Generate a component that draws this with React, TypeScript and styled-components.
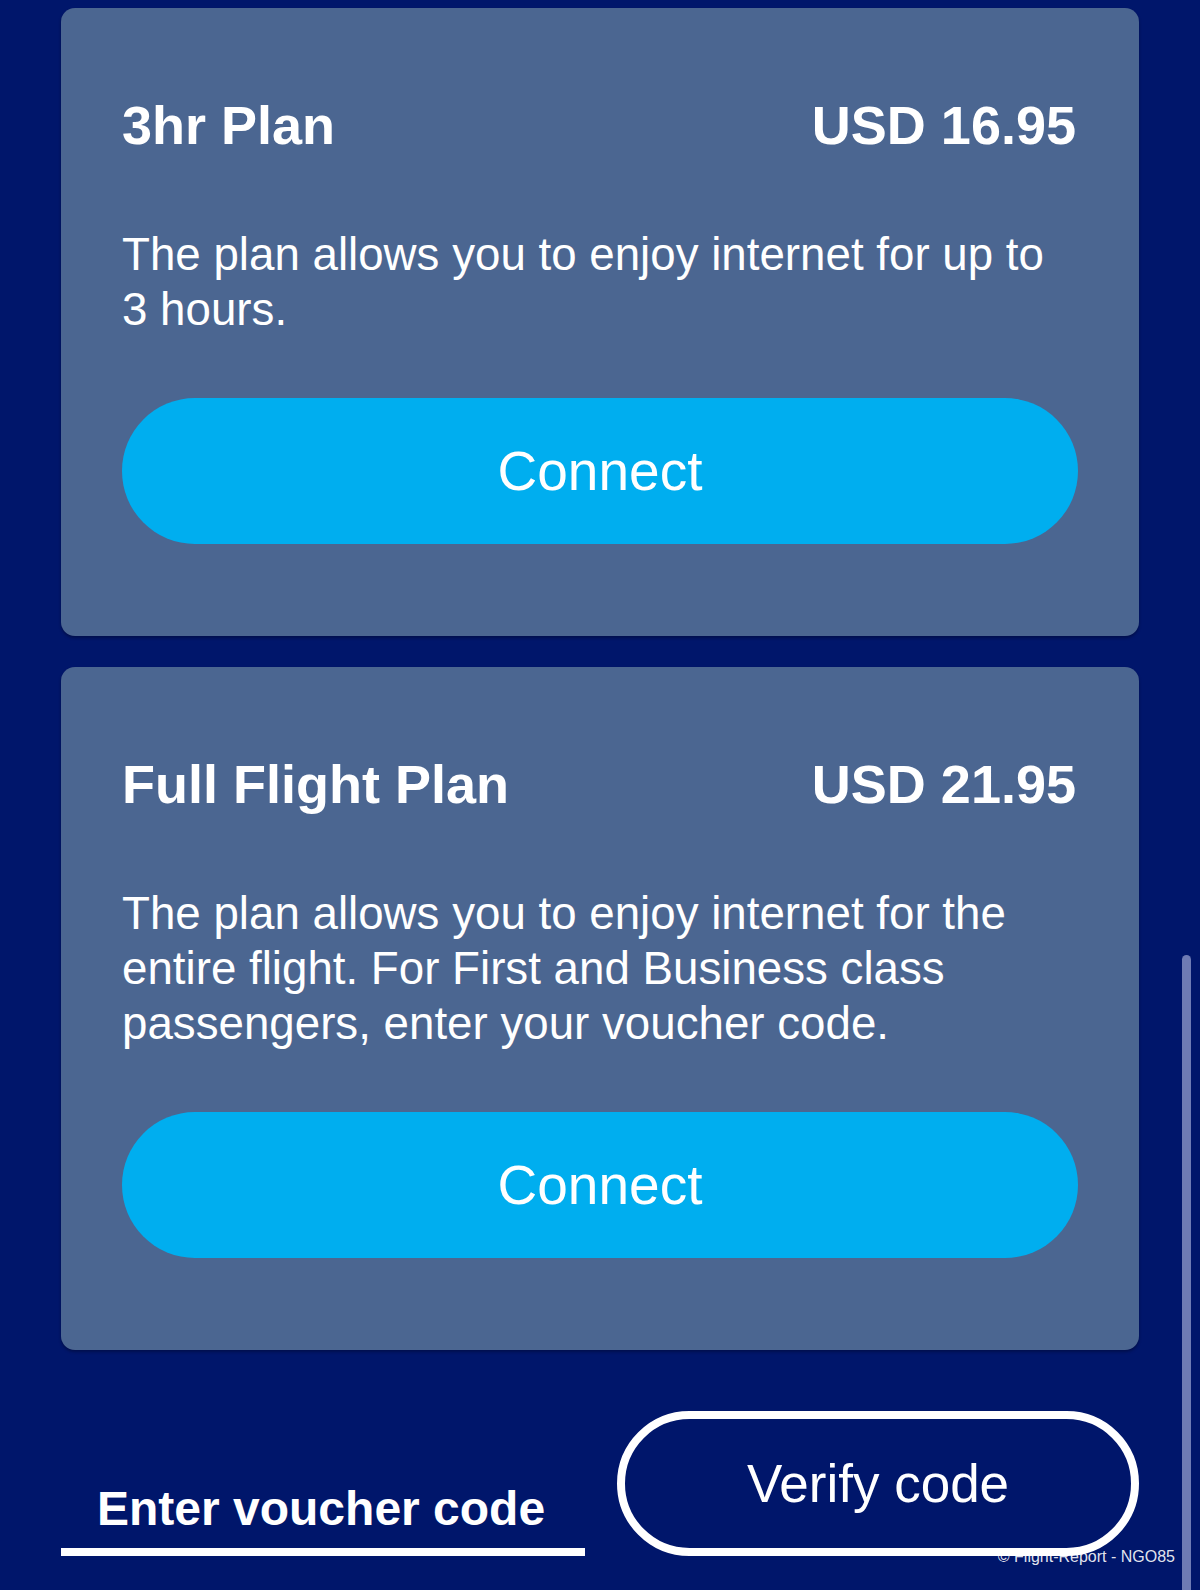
import React from "react";
import styled, { createGlobalStyle } from "styled-components";

const GlobalStyle = createGlobalStyle`
  html, body {
    margin: 0;
    padding: 0;
    background: #00166b;
  }
  body {
    font-family: "Liberation Sans", Arial, Helvetica, sans-serif;
    color: #ffffff;
  }
  * { box-sizing: border-box; }
`;

const Page = styled.main`
  position: relative;
  height: 1590px;
  overflow: hidden;
  padding: 8px 61px 0;
  display: flex;
  flex-direction: column;
  background: #00166b;
`;

const PlanList = styled.section`
  display: flex;
  flex-direction: column;
  gap: 31px;
`;

const PlanCard = styled.article`
  background: #4b6691;
  border-radius: 14px;
  padding: 86px 61px 92px;
  box-shadow: 0 2px 3px rgba(0, 0, 20, 0.35);
  display: flex;
  flex-direction: column;
`;

const PlanHeader = styled.header`
  display: flex;
  justify-content: space-between;
  align-items: baseline;
  font-size: 54px;
  font-weight: 700;
  line-height: 62px;
`;

const PlanTitle = styled.h2`
  margin: 0;
  font-size: inherit;
  font-weight: inherit;
`;

const PlanPrice = styled.span`
  font-size: inherit;
  margin-right: 2px;
`;

const PlanDescription = styled.p`
  margin: 71px 0 0;
  font-size: 45.7px;
  line-height: 55px;
`;

const ConnectButton = styled.button`
  margin-top: 61px;
  width: 100%;
  height: 146px;
  border: none;
  border-radius: 73px;
  background: #00aeef;
  color: #ffffff;
  font-family: inherit;
  font-size: 55px;
  cursor: pointer;
`;

const VoucherRow = styled.form`
  margin-top: 61px;
  display: flex;
  align-items: flex-end;
  gap: 32px;
`;

const VoucherInput = styled.input`
  width: 524px;
  height: 76px;
  padding: 0 0 12px 36px;
  border: none;
  border-bottom: 8px solid #ffffff;
  background: transparent;
  color: #ffffff;
  font-family: inherit;
  font-size: 48px;
  font-weight: 700;
  outline: none;
  &::placeholder {
    color: #ffffff;
    opacity: 1;
  }
`;

const VerifyButton = styled.button`
  width: 522px;
  height: 145px;
  border: 8px solid #ffffff;
  border-radius: 73px;
  background: transparent;
  color: #ffffff;
  font-family: inherit;
  font-size: 53px;
  cursor: pointer;
`;

const Watermark = styled.span`
  position: absolute;
  right: 25px;
  top: 1548px;
  font-size: 16px;
  line-height: 18px;
  color: rgba(255, 255, 255, 0.9);
  white-space: nowrap;
`;

const ScrollThumb = styled.div`
  position: absolute;
  right: 9px;
  top: 955px;
  bottom: -10px;
  width: 9px;
  border-radius: 5px;
  background: rgba(200, 208, 240, 0.55);
`;

const plans = [
  {
    title: "3hr Plan",
    price: "USD 16.95",
    description: "The plan allows you to enjoy internet for up to 3 hours.",
  },
  {
    title: "Full Flight Plan",
    price: "USD 21.95",
    description:
      "The plan allows you to enjoy internet for the entire flight. For First and Business class passengers, enter your voucher code.",
  },
];

export default function App() {
  return (
    <>
      <GlobalStyle />
      <Page>
        <PlanList>
          {plans.map((p) => (
            <PlanCard key={p.title}>
              <PlanHeader>
                <PlanTitle>{p.title}</PlanTitle>
                <PlanPrice>{p.price}</PlanPrice>
              </PlanHeader>
              <PlanDescription>{p.description}</PlanDescription>
              <ConnectButton type="button">Connect</ConnectButton>
            </PlanCard>
          ))}
        </PlanList>
        <VoucherRow onSubmit={(e) => e.preventDefault()}>
          <VoucherInput type="text" placeholder="Enter voucher code" />
          <VerifyButton type="submit">Verify code</VerifyButton>
        </VoucherRow>
        <Watermark>© Flight-Report - NGO85</Watermark>
        <ScrollThumb />
      </Page>
    </>
  );
}
